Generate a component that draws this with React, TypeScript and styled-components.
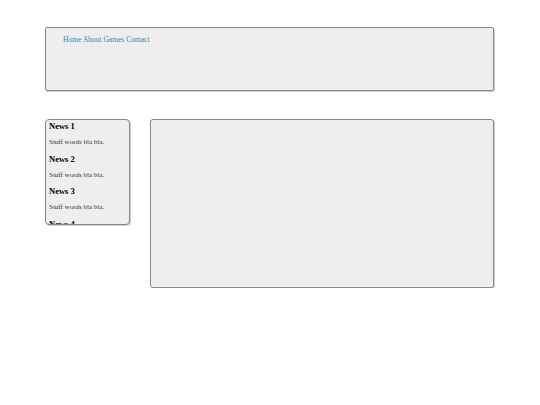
import React from 'react';
import styled, { createGlobalStyle } from 'styled-components';

const news = [1, 2, 3, 4];

const App = () => {
  return (
    <>
      <GlobalStyle />
      <Page>
        <Header>
          <Nav>
            <NavLink href="#">Home</NavLink> <NavLink href="#">About</NavLink>{' '}
            <NavLink href="#">Games</NavLink> <NavLink href="#">Contact</NavLink>
          </Nav>
        </Header>
        <Columns>
          <Sidebar>
            {news.map((n) => (
              <NewsItem key={n}>
                <NewsTitle>News {n}</NewsTitle>
                <NewsText>Stuff words bla bla.</NewsText>
              </NewsItem>
            ))}
          </Sidebar>
          <Content />
        </Columns>
      </Page>
    </>
  );
};

const GlobalStyle = createGlobalStyle`
  body {
    margin: 0;
    background: #fff;
    font-family: "Liberation Serif", "Times New Roman", serif;
  }
`;

const Page = styled.div`
  width: 449px;
  padding: 27px 0 0 45px;
`;

const Panel = styled.div`
  background-color: #eeeeee;
  border: 1px solid #888;
  box-shadow: 1px 1px 0 #d0d0d0;
  box-sizing: border-box;
`;

const Header = styled(Panel)`
  height: 64px;
  border-radius: 2px;
  padding: 7px 17px;
`;

const Nav = styled.nav`
  font-size: 7.5px;
  line-height: 9px;
`;

const NavLink = styled.a`
  color: #3a85b5;
  text-decoration: none;
`;

const Columns = styled.div`
  display: flex;
  gap: 20px;
  margin-top: 28px;
`;

const Sidebar = styled(Panel)`
  width: 85px;
  height: 106px;
  border-radius: 4px;
  overflow: hidden;
  padding: 0 3px;
`;

const NewsItem = styled.div`
  height: 32.5px;
`;

const NewsTitle = styled.h3`
  margin: 0;
  font-size: 8.5px;
  line-height: 12px;
  font-weight: bold;
  color: #000;
`;

const NewsText = styled.p`
  margin: 6px 0 0;
  font-size: 7px;
  line-height: 8px;
  color: #333;
`;

const Content = styled(Panel)`
  flex: 1;
  height: 169px;
  border-radius: 3px;
`;

export default App;
